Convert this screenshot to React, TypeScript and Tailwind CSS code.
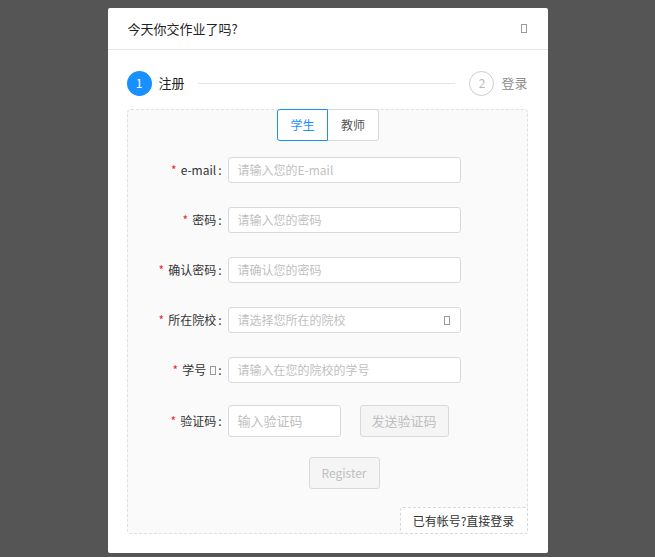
import React, { useState } from 'react';

const FONT = '"Noto Sans CJK SC", "Noto Sans", sans-serif';

// missing-glyph box, the picture shows icon fonts that did not load
function Tofu({ className = '' }: { className?: string }) {
  return <span className={`inline-block w-[6px] h-[9px] border border-[#9a9a9a] ${className}`} />;
}

function Field({ label, placeholder, extra, select }: { label: string; placeholder: string; extra?: boolean; select?: boolean }) {
  return (
    <div className="flex items-center h-[26px]">
      <div className="w-[100px] pr-[6px] flex justify-end items-center text-[12px] text-[#333]">
        <span className="text-[#f5222d] mr-[4px]">*</span>
        <span>{label}</span>
        {extra && <Tofu className="ml-[4px] mt-[1px]" />}
        <span className="ml-[2px]">:</span>
      </div>
      <div className="w-[233px] h-[26px] bg-white border border-[#d9d9d9] rounded-[3px] flex items-center justify-between px-[9px]">
        <span className="text-[12px] text-[#bfbfbf]">{placeholder}</span>
        {select && <Tofu className="mr-[1px]" />}
      </div>
    </div>
  );
}

export default function App() {
  const [role, setRole] = useState<'student' | 'teacher'>('student');

  return (
    <div className="min-h-screen w-full bg-[#555555] pt-[8px]" style={{ fontFamily: FONT }}>
      <div className="mx-auto w-[440px] bg-white rounded-[2px] overflow-hidden">
        {/* header */}
        <div className="h-[42px] border-b border-[#e8e8e8] flex items-center justify-between pl-[20px] pr-[21px]">
          <span className="text-[13px] text-[#222]">今天你交作业了吗?</span>
          <Tofu />
        </div>

        <div className="pt-[20px] pb-[19px] pl-[19px] pr-[20px]">
          {/* steps */}
          <div className="flex items-center h-[26px]">
            <div className="w-[25px] h-[25px] rounded-full bg-[#1890ff] text-white text-[12px] flex items-center justify-center">1</div>
            <span className="ml-[7px] text-[13px] text-[#222]">注册</span>
            <div className="flex-1 h-px bg-[#e5e5e5] mx-[13px]" />
            <div className="ml-px w-[25px] h-[25px] rounded-full border border-[#cccccc] text-[#bbbbbb] text-[12px] flex items-center justify-center">2</div>
            <span className="ml-[7px] text-[13px] text-[#8c8c8c]">登录</span>
          </div>

          {/* form panel */}
          <div className="mt-[13px] h-[425px] border border-dashed border-[#e0e0e0] rounded-[4px] bg-[#fafafa] flex flex-col">
            <div className="flex justify-center -mt-px ml-[2px]">
              <button
                onClick={() => setRole('student')}
                className={`w-[51px] h-[32px] text-[12px] rounded-l-[3px] border ${role === 'student' ? 'border-[#1890ff] text-[#1890ff] bg-white' : 'border-[#d9d9d9] text-[#555] bg-white'}`}
              >
                学生
              </button>
              <button
                onClick={() => setRole('teacher')}
                className={`w-[51px] h-[32px] text-[12px] rounded-r-[3px] border border-l-0 ${role === 'teacher' ? 'border-[#1890ff] text-[#1890ff] bg-white' : 'border-[#d9d9d9] text-[#555] bg-white'}`}
              >
                教师
              </button>
            </div>

            <div className="mt-[16px] flex flex-col gap-[24px]">
              <Field label="e-mail" placeholder="请输入您的E-mail" />
              <Field label="密码" placeholder="请输入您的密码" />
              <Field label="确认密码" placeholder="请确认您的密码" />
              <Field label="所在院校" placeholder="请选择您所在的院校" select />
              <Field label="学号" placeholder="请输入在您的院校的学号" extra />
            </div>

            {/* captcha */}
            <div className="mt-[22px] flex items-center h-[32px]">
              <div className="w-[100px] pr-[6px] flex justify-end items-center text-[12px] text-[#333]">
                <span className="text-[#f5222d] mr-[4px]">*</span>
                <span>验证码</span>
                <span className="ml-[2px]">:</span>
              </div>
              <div className="w-[113px] h-[32px] bg-white border border-[#d9d9d9] rounded-[3px] flex items-center px-[9px]">
                <span className="text-[13px] text-[#bfbfbf]">输入验证码</span>
              </div>
              <button className="ml-[19px] w-[89px] h-[32px] bg-[#f5f5f5] border border-[#d9d9d9] rounded-[3px] text-[13px] text-[#bfbfbf]">
                发送验证码
              </button>
            </div>

            <div className="mt-[20px] flex justify-center">
              <button className="ml-[34px] w-[71px] h-[32px] bg-[#f5f5f5] border border-[#d9d9d9] rounded-[3px] text-[12px] text-[#bfbfbf]">
                Register
              </button>
            </div>

            <div className="mt-auto flex justify-end -mb-px -mr-px">
              <button className="w-[128px] h-[27px] bg-white border border-dashed border-[#d9d9d9] rounded-[3px] text-[12px] text-[#333]">
                已有帐号?直接登录
              </button>
            </div>
          </div>
        </div>
      </div>
    </div>
  );
}
